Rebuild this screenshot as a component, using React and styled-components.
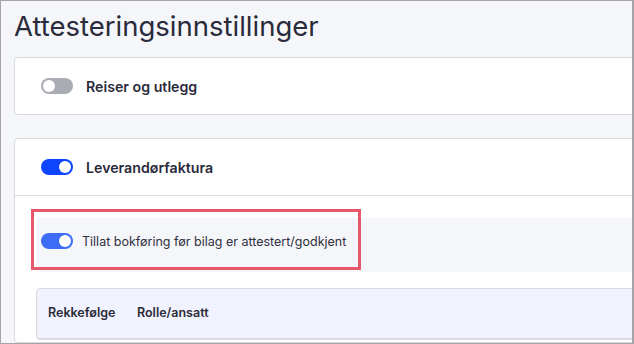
import React from "react";
import styled, { createGlobalStyle } from "styled-components";

const GlobalStyle = createGlobalStyle`
  html, body {
    margin: 0;
    padding: 0;
    background: #ffffff;
  }
  * {
    box-sizing: border-box;
  }
`;

const Frame = styled.div`
  width: 634px;
  height: 344px;
  overflow: hidden;
  background: #f5f6fa;
  border: 1px solid #a4a4a8;
  border-right-width: 2px;
  font-family: "Inter", "Noto Sans", sans-serif;
  color: #2a2b3a;
  padding: 9px 0 0 13px;
`;

const Title = styled.h1`
  margin: 0 0 15px 0;
  font-size: 27.5px;
  font-weight: 400;
  line-height: 32px;
  color: #2a2b3a;
`;

const Card = styled.div`
  width: 660px;
  background: #ffffff;
  border: 1px solid #d9dadf;
  border-radius: 4px;
  margin-bottom: ${(p) => p.gap || 0}px;
`;

const CardHeader = styled.div`
  display: flex;
  align-items: center;
  gap: 13px;
  height: ${(p) => p.h}px;
  padding-left: 26px;
  border-bottom: ${(p) => (p.divider ? "1px solid #d9dadf" : "none")};
`;

const SwitchTrack = styled.span`
  position: relative;
  display: inline-block;
  width: 32px;
  height: 16px;
  border-radius: 8px;
  flex-shrink: 0;
  background: ${(p) => p.color};
`;

const SwitchKnob = styled.span`
  position: absolute;
  top: 2px;
  left: ${(p) => (p.on ? 18 : 2)}px;
  width: 12px;
  height: 12px;
  border-radius: 50%;
  background: #ffffff;
`;

const CardLabel = styled.span`
  font-size: 14.2px;
  font-weight: 600;
  color: #2a2b3a;
`;

const CardBody = styled.div`
  padding: 22px 0 0 21px;
  height: 146px;
`;

const OptionPanel = styled.div`
  position: relative;
  display: flex;
  align-items: center;
  gap: 9px;
  height: 54px;
  padding: 0 0 8px 5px;
  background: #f5f6fa;
  border-radius: 4px;
  margin-bottom: 16px;
`;

const OptionLabel = styled.span`
  font-size: 12.5px;
  font-weight: 400;
  color: #2f3040;
`;

const Highlight = styled.div`
  position: absolute;
  left: -5px;
  top: -9px;
  width: 330px;
  height: 61px;
  border: 3px solid #e6586a;
  pointer-events: none;
`;

const Table = styled.div`
  width: 640px;
  background: #f0f3fd;
  border: 1px solid #d9dadf;
  border-radius: 4px;
`;

const HeaderRow = styled.div`
  display: flex;
  align-items: center;
  height: 50px;
  padding: 0 0 2px 11px;
  border-bottom: 1px solid #d9dadf;
`;

const HeaderCell = styled.span`
  width: ${(p) => p.w}px;
  font-size: 12.5px;
  font-weight: 600;
  color: #2a2b3a;
`;

function Switch({ on, color }) {
  return (
    <SwitchTrack color={color}>
      <SwitchKnob on={on ? 1 : 0} />
    </SwitchTrack>
  );
}

export default function App() {
  return (
    <>
      <GlobalStyle />
      <Frame>
        <Title>Attesteringsinnstillinger</Title>
        <Card gap={23}>
          <CardHeader h={56}>
            <Switch color="#a9acb3" />
            <CardLabel>Reiser og utlegg</CardLabel>
          </CardHeader>
        </Card>
        <Card>
          <CardHeader h={57} divider>
            <Switch on color="#0d45ff" />
            <CardLabel>Leverandørfaktura</CardLabel>
          </CardHeader>
          <CardBody>
            <OptionPanel>
              <Switch on color="#3d6cf6" />
              <OptionLabel>Tillat bokføring før bilag er attestert/godkjent</OptionLabel>
              <Highlight />
            </OptionPanel>
            <Table>
              <HeaderRow>
                <HeaderCell w={89}>Rekkefølge</HeaderCell>
                <HeaderCell w={120}>Rolle/ansatt</HeaderCell>
              </HeaderRow>
            </Table>
          </CardBody>
        </Card>
      </Frame>
    </>
  );
}
